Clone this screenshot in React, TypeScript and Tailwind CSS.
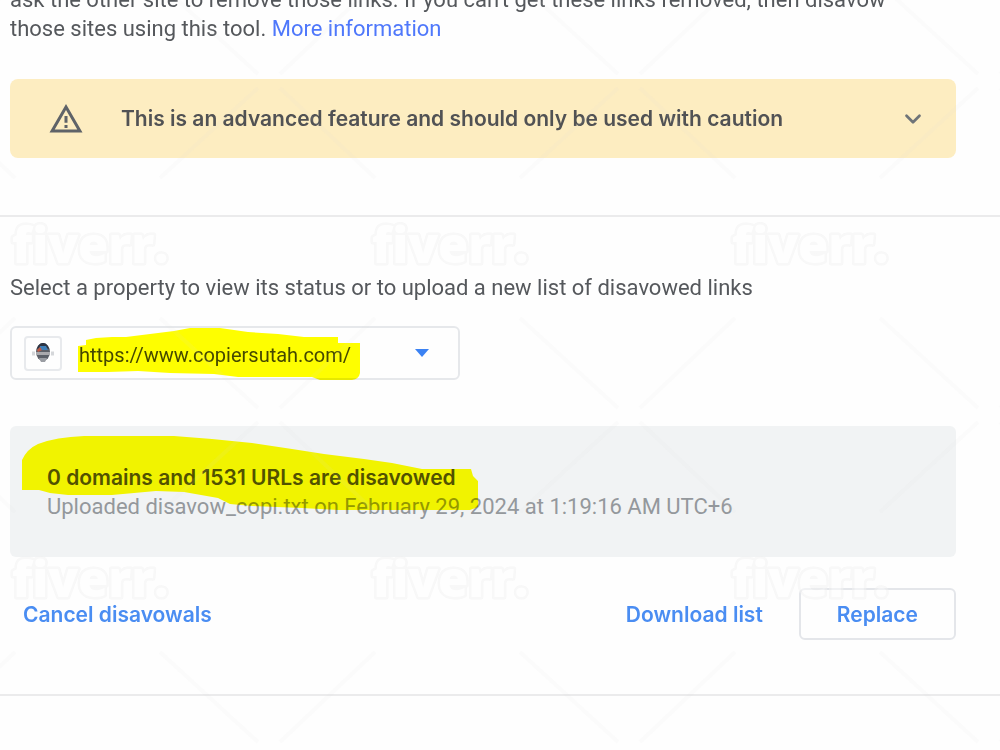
import React, { useState } from 'react';
import { ChevronDown } from 'lucide-react';

const properties = ['https://www.copiersutah.com/'];

const WarningIcon: React.FC = () => (
  <svg className="h-[36px] w-[36px] shrink-0" viewBox="0 0 24 24" fill="#5f6368" aria-hidden="true">
    <path d="M12 5.99 19.53 19H4.47L12 5.99M12 2 1 21h22L12 2z" />
    <path d="M11 16h2v2h-2zM11 10h2v4.5h-2z" />
  </svg>
);

const SiteIcon: React.FC = () => (
  <svg className="h-[24px] w-[24px]" viewBox="0 0 24 24" aria-hidden="true">
    <path d="M1 10.500h3v4H1zM20 10.500h3v4h-3z" fill="#d5d7da" />
    <ellipse cx="12" cy="11" rx="7" ry="9" fill="#5c6068" />
    <path d="M6 8c1-5 4-6 6-6s5 1 6 6l-6-2z" fill="#2c3444" />
    <path d="M9 5h6l2 4H8z" fill="#3f7fb8" />
    <path d="M6 9l3-3 2 3-4 2z" fill="#c05a45" />
    <path d="M5 11h14v3H5z" fill="#a9a9ad" />
    <path d="M8 17h8l-2 4h-4z" fill="#9a9da3" />
  </svg>
);

const columns = [-360, 0, 360, 720];
const rows = [-334, 0, 334];

const Watermark: React.FC = () => (
  <svg className="absolute inset-0 h-full w-full pointer-events-none" aria-hidden="true">
    {rows.map((y) =>
      columns.map((x) => (
        <g key={`${x}-${y}`} transform={`translate(${x} ${y})`}>
          <path
            d="M160 318 258 408M375 318 280 408M258 422 160 512M280 422 375 512"
            fill="none"
            stroke="#e0e0e0"
            strokeOpacity="0.09"
            strokeWidth="4"
          />
          {x >= 0 && y >= 0 && (
            <text
              x="12"
              y="263"
              className="font-['Open_Sans',sans-serif] text-[49px] font-extrabold"
              fill="#fefefe"
              stroke="#f1f1f1"
              strokeWidth="5"
              strokeLinejoin="round"
              paintOrder="stroke"
              opacity="0.5"
            >
              fiverr.
            </text>
          )}
        </g>
      ))
    )}
  </svg>
);

const App: React.FC = () => {
  const [property, setProperty] = useState(properties[0]);
  const [expanded, setExpanded] = useState(false);

  return (
    <main className="relative min-h-screen overflow-hidden bg-[#fefefe] font-[Roboto,sans-serif] text-[22px] leading-[29px] text-[#55585c]">
      <section className="-mt-[15px] pl-[10px] pr-[44px] pb-[57px]">
        <p className="pr-10">
          ask the other site to remove those links. If you can't get these links removed, then disavow
          those sites using this tool.{' '}
          <a href="#more" className="text-[#4f78fb]">More information</a>
        </p>
        <button
          type="button"
          aria-expanded={expanded}
          onClick={() => setExpanded(!expanded)}
          className="mt-9 flex h-[79px] w-full items-center rounded-lg bg-[#fdedc1] pl-[38px] pr-[30px] text-left font-[Inter,sans-serif] text-[21px] font-semibold text-[#515254]"
        >
          <WarningIcon />
          <span className="ml-[37px] flex-1">This is an advanced feature and should only be used with caution</span>
          <ChevronDown className="h-[26px] w-[26px] text-[#6f7478]" strokeWidth={2.5} />
        </button>
      </section>

      <section className="border-y-2 border-[#ebebec] pt-14 pb-[54px] pl-[10px] pr-[44px]">
        <label htmlFor="property">
          Select a property to view its status or to upload a new list of disavowed links
        </label>
        <div className="relative mt-6 flex h-[54px] w-[450px] max-w-full items-center rounded-md border-2 border-[#e6e8eb] bg-[#fefefe] pl-3">
          <span className="flex h-[35px] w-[38px] items-center justify-center rounded-sm border-2 border-[#e8eaed]">
            <SiteIcon />
          </span>
          <select
            id="property"
            value={property}
            onChange={(e) => setProperty(e.target.value)}
            className="h-full flex-1 appearance-none bg-transparent pt-1 pl-[17px] text-[20px] text-[#45484c] outline-none"
          >
            {properties.map((p) => (
              <option key={p}>{p}</option>
            ))}
          </select>
          <svg className="absolute right-[29px] h-[8px] w-[14px] pointer-events-none" viewBox="0 0 14 8" aria-hidden="true">
            <path d="M0 0h14L7 8z" fill="#3b82f3" />
          </svg>
          <svg className="absolute -top-[2px] left-[66px] h-[54px] w-[284px] mix-blend-multiply pointer-events-none" viewBox="0 0 284 54" aria-hidden="true">
            <path
              d="M0 46V20L8 19V14L18 12 34 11H48L72 8 96 5 112 2H142L170 6 200 8 226 11H260V17H282V47Q281 53 274 54H242L234 51H160L136 48 92 47 60 45 30 46Z"
              fill="#ffff00"
            />
          </svg>
        </div>

        <div className="relative mt-[46px] h-[131px] rounded-md bg-[#f1f3f4] pt-[37px] pl-[37px]">
          <h2 className="font-[Inter,sans-serif] text-[21px] font-semibold text-[#515254]">
            0 domains and 1531 URLs are disavowed
          </h2>
          <p className="text-[#94989c]">Uploaded disavow_copi.txt on February 29, 2024 at 1:19:16 AM UTC+6</p>
          <svg className="absolute top-[9px] left-3 h-[76px] w-[458px] mix-blend-multiply pointer-events-none" viewBox="0 0 458 76" aria-hidden="true">
            <path
              d="M0 55V25Q5 14 16 9 34 2 62 1H152L190 4 230 8 270 14 302 19 342 24 370 28 400 34H449L451 41 456 46V72L448 75H316L280 73 230 71 208 69 196 63 162 57 134 56 90 60 46 60 28 58 17 55Z"
              fill="#ffff00"
            />
          </svg>
        </div>

        <div className="mt-[31px] flex h-[52px] items-center font-[Inter,sans-serif] text-[21px] font-semibold text-[#4a8df2]">
          <button type="button" className="ml-[13px]">Cancel disavowals</button>
          <button type="button" className="ml-auto">Download list</button>
          <button type="button" className="ml-9 h-full rounded-md border-2 border-[#e4e6ea] px-9">Replace</button>
        </div>
      </section>
      <Watermark />
    </main>
  );
};

export default App;
